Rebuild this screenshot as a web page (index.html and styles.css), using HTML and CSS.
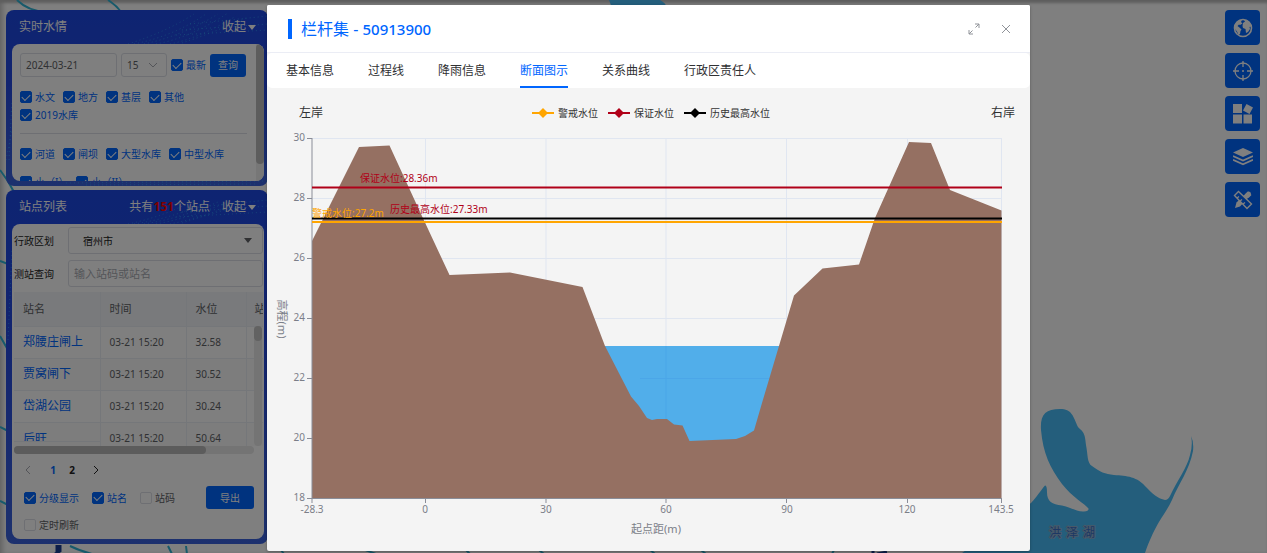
FILE: index.html
```html
<!DOCTYPE html>
<html lang="zh-CN">
<head>
<meta charset="utf-8">
<title>实时水情</title>
<link rel="stylesheet" href="styles.css">
</head>
<body>
<div class="map">
  <svg class="map-canvas" viewBox="0 0 1267 553" preserveAspectRatio="xMaxYMax slice" aria-hidden="true">
    <g fill="#49bdf9">
      <path d="M609 0H660Q666 3 667 8H612Z"/>
      <path d="M962 553L1031 503C1036 498 1041 490 1045 485.500Q1047 485 1047 492C1047 502 1052 504 1062 505.500C1072 508 1078 512 1084 511.500Q1089 511 1088.500 508.500C1085 504 1072 497 1062 484C1050 468 1043 453 1041 430C1040 415 1045 409 1060 409C1072 409 1073 416 1078 427C1083 432 1085 432 1086 445C1088 455 1087 463 1092 466C1100 472 1105 474 1114 475C1127 476 1137 476 1147 488C1155 497 1161 499 1165 500Q1168 500 1170 496C1177 481 1187 468 1190 455Q1193 445 1191 436Q1194 442 1193 451C1189 471 1179 483 1172 500C1165 515 1156 522 1145 553Z"/>
    </g>
    <g fill="none" stroke="#2fb4d6" stroke-width="2">
      <path d="M17 0Q28 11 46 12M108 0Q116 5 122 13M0 170Q8 180 14 192M0 261L8 264M0 336L8 350M0 427L8 431M0 501L8 505M70 546Q80 551 92 554M168 546L172 554M186 546L187 554M278 546L284 554M360 548L376 554M462 546L470 554M534 546L544 554M648 548L655 554M696 546L706 554M836 546L832 554"/>
    </g>
    <path d="M57 545V554M60 545V551L55 554M873 550V554M877 554L887 552" fill="none" stroke="#1a3c94" stroke-width="3"/>
    <text class="lake-name" x="1049 1066 1083" y="537">洪泽湖</text>
  </svg>
</div>

<aside class="sidebar">
  <section class="panel">
    <svg class="panel-art" viewBox="0 0 262 176" preserveAspectRatio="xMidYMin slice" aria-hidden="true">
      <g fill="none" stroke="#35b6ff" stroke-width="1" stroke-dasharray="1 3" opacity=".55">
        <path d="M122 34Q160 22 188 4M128 34Q168 26 200 4M138 34Q176 26 212 4M150 34Q184 28 222 3M164 34Q194 28 230 6M176 33Q204 24 240 8M184 14L262 6M176 20L262 14M170 25L262 20M0 150L8 110M3 150L6 90M60 173L262 171M80 175L250 174"/>
      </g>
    </svg>
    <header class="panel-head"><h2>实时水情</h2><button type="button" class="fold">收起<i class="caret"></i></button></header>
    <div class="panel-body water-filter">
      <div class="filters">
        <div class="query">
          <input class="field date" type="text" value="2024-03-21" aria-label="日期">
          <span class="hour"><select class="field" aria-label="小时"><option>15</option></select><svg viewBox="0 0 10 6" aria-hidden="true"><path d="M1 1L5 5L9 1"/></svg></span>
          <label class="check"><input type="checkbox" checked>最新</label>
          <button type="button" class="btn small">查询</button>
        </div>
        <div class="checks">
          <label class="check"><input type="checkbox" checked>水文</label>
          <label class="check"><input type="checkbox" checked>地方</label>
          <label class="check"><input type="checkbox" checked>基层</label>
          <label class="check"><input type="checkbox" checked>其他</label>
          <label class="check"><input type="checkbox" checked>2019水库</label>
        </div>
        <hr>
        <div class="checks loose">
          <label class="check"><input type="checkbox" checked>河道</label>
          <label class="check"><input type="checkbox" checked>闸坝</label>
          <label class="check"><input type="checkbox" checked>大型水库</label>
          <label class="check"><input type="checkbox" checked>中型水库</label>
          <label class="check"><input type="checkbox" checked>小（I）</label>
          <label class="check"><input type="checkbox" checked>小（II）</label>
        </div>
      </div>
      <div class="scroll-track"><div class="scroll-thumb filter-thumb"></div></div>
    </div>
  </section>

  <section class="panel">
    <svg class="panel-art" viewBox="0 0 262 356" preserveAspectRatio="xMidYMin slice" aria-hidden="true">
      <g fill="none" stroke="#35b6ff" stroke-width="1" stroke-dasharray="1 3" opacity=".55">
        <path d="M122 34Q160 26 188 10M128 34Q168 28 200 12M138 34Q176 28 212 12M150 34Q184 28 222 12M164 34Q194 28 230 14M176 33Q204 24 240 14M184 18L262 10M176 22L262 16M170 27L262 22M2 150L6 60"/>
      </g>
    </svg>
    <header class="panel-head"><h2>站点列表</h2><span class="total">共有<b>151</b>个站点</span><button type="button" class="fold">收起<i class="caret"></i></button></header>
    <div class="panel-body">
      <div class="form-row"><label for="area">行政区划</label><span class="area"><select id="area" class="field"><option>宿州市</option></select><i class="caret"></i></span></div>
      <div class="form-row"><label for="station">测站查询</label><input id="station" class="field" type="text" placeholder="输入站码或站名"></div>
      <div class="table-wrap">
        <table class="stations">
          <thead><tr><th class="c-name">站名</th><th class="c-time">时间</th><th class="c-level">水位</th><th>站码</th></tr></thead>
          <tbody>
            <tr><td><a href="#">郑腰庄闸上</a></td><td>03-21 15:20</td><td>32.58</td><td></td></tr>
            <tr class="alt"><td><a href="#">贾窝闸下</a></td><td>03-21 15:20</td><td>30.52</td><td></td></tr>
            <tr><td><a href="#">岱湖公园</a></td><td>03-21 15:20</td><td>30.24</td><td></td></tr>
            <tr class="alt"><td class="cut"><a href="#">后旺</a></td><td>03-21 15:20</td><td>50.64</td><td></td></tr>
          </tbody>
        </table>
        <div class="table-scroll"><div class="scroll-thumb"></div></div>
      </div>
      <div class="scroll-x"><div class="scroll-x-thumb"></div></div>
      <nav class="pager" aria-label="分页">
        <button type="button" aria-label="上一页" class="off"><svg viewBox="0 0 6 10"><path d="M5 1L1 5L5 9"/></svg></button>
        <button type="button" class="on">1</button>
        <button type="button">2</button>
        <button type="button" aria-label="下一页"><svg viewBox="0 0 6 10"><path d="M1 1L5 5L1 9"/></svg></button>
      </nav>
      <div class="options">
        <label class="check"><input type="checkbox" checked>分级显示</label>
        <label class="check"><input type="checkbox" checked>站名</label>
        <label class="check plain"><input type="checkbox">站码</label>
        <button type="button" class="btn">导出</button>
      </div>
      <div class="options refresh"><label class="check plain"><input type="checkbox">定时刷新</label></div>
    </div>
  </section>
</aside>

<div class="tools">
  <button type="button" aria-label="地球"><svg viewBox="0 0 20 20"><circle cx="10" cy="10" r="8.500" fill="none" stroke="#fff" stroke-width="1.600"/><path fill="#fff" d="M2 7C3 4 6 1.800 9 1.500L8 4L9.500 5.500L7 7L6 6.500L4.500 8L7 10L8.500 11.500L7.500 13L7 16L5.500 17L4 13.500L2 11ZM10 5L12 3.500L11 2H13.500C16 3 18.500 6 18.500 9.500L17.500 8.500L16.500 9L17 11L15 14L13 15L12.500 11L10 10L9.500 8Z"/></svg></button>
  <button type="button" aria-label="定位"><svg viewBox="0 0 20 20" fill="none" stroke="#fff" stroke-width="1.300"><circle cx="10" cy="10" r="8"/><path d="M10 0V6M10 14V20M0 10H6M14 10H20M9 10H11"/></svg></button>
  <button type="button" aria-label="应用"><svg viewBox="0 0 20 20" fill="#fff"><path d="M0 0H9V9H0ZM0 10.500H9V19.500H0ZM10.500 10.500H19V19.500H10.500ZM13.500 0L20 3.500L16.500 10L10 6.500Z"/></svg></button>
  <button type="button" aria-label="图层"><svg viewBox="0 0 20 20"><path d="M10 1L20 5.500L10 10L0 5.500Z" fill="#fff"/><path d="M0 9L10 13.500L20 9M0 12.800L10 17.300L20 12.800" fill="none" stroke="#fff" stroke-width="1.600"/></svg></button>
  <button type="button" aria-label="标绘"><svg viewBox="0 0 20 20"><path d="M2 18L3.500 12.500L14.500 1.800Q16 1 17.500 2.500Q18.500 4 17.500 5.200L7 16.500Z" fill="#fff"/><path d="M5.500 1.500L18.500 14L14 18.500L1.500 5.500Z" fill="#0066ff" stroke="#fff" stroke-width="1.400"/><path d="M4 8L6 6.500M7 11L9 9.500M10 14L12 12.500" stroke="#fff" stroke-width="1.300"/><path d="M12 4.500L15 1.500L18.500 5L15.500 8Z" fill="#fff"/></svg></button>
</div>

<div class="mask"></div>

<main class="dialog" role="dialog" aria-labelledby="dialog-title">
  <header class="dialog-head">
    <h1 id="dialog-title">栏杆集 - <span>50913900</span></h1>
    <button type="button" aria-label="全屏"><svg viewBox="0 0 12 12"><path d="M7 1H11V5M11 1L7.500 4.500M5 11H1V7M1 11L4.500 7.500"/></svg></button>
    <button type="button" aria-label="关闭"><svg viewBox="0 0 12 12"><path d="M2 2L10 10M10 2L2 10"/></svg></button>
  </header>
  <nav class="tabs">
    <a href="#">基本信息</a><a href="#">过程线</a><a href="#">降雨信息</a><a href="#" class="active">断面图示</a><a href="#">关系曲线</a><a href="#">行政区责任人</a>
  </nav>
  <div class="chart-head">
    <strong>左岸</strong>
    <ul class="legend">
      <li class="warn"><svg viewBox="0 0 22 10"><path d="M0 5H22" stroke="currentColor" stroke-width="2"/><path d="M11 0L16 5L11 10L6 5Z" fill="currentColor"/></svg><span>警戒水位</span></li>
      <li class="safe"><svg viewBox="0 0 22 10"><path d="M0 5H22" stroke="currentColor" stroke-width="2"/><path d="M11 0L16 5L11 10L6 5Z" fill="currentColor"/></svg><span>保证水位</span></li>
      <li class="peak"><svg viewBox="0 0 22 10"><path d="M0 5H22" stroke="currentColor" stroke-width="2"/><path d="M11 0L16 5L11 10L6 5Z" fill="currentColor"/></svg><span>历史最高水位</span></li>
    </ul>
    <strong>右岸</strong>
  </div>
  <svg class="chart" viewBox="267 128 763 423" role="img" aria-label="断面图示">
    <path class="grid" d="M312 138.500H1002M312 198.500H1002M312 258.500H1002M312 318.500H1002M312 378.500H1002M312 438.500H1002M425.500 138V498M546 138V498M666 138V498M786.500 138V498M907.500 138V498M1001.500 138V498"/>
    <path d="M604 346H780L755 450H640Z" fill="#51aeea"/>
    <path d="M640 378.500H772M666 346V430" stroke="#4ba6e8" fill="none"/>
    <path class="ground" d="M312 241L359 147L389.500 145.500L421 214L449.500 275L510 272.500L582.500 287L605 346L631 396.500L639 406L647 418L652 420L657 419H667L674 424.500L682.500 425.500L689.500 441L736 439L745 436L754 430.500L762 403L794 295.500L822.500 268.500L859 264.500L875 218L909 142L931 143L950 190L1001.500 210.500V498H312Z"/>
    <path class="axis" d="M312 138V499M311 498.500H1002M307 138.500H312M307 198.500H312M307 258.500H312M307 318.500H312M307 378.500H312M307 438.500H312M307 498.500H312M312 498V503M425.500 498V503M546 498V503M666 498V503M786.500 498V503M907.500 498V503M1001.500 498V503"/>
    <g fill="none" stroke-width="2"><path d="M312 187.500H1002" stroke="#b00018"/><path d="M312 222H1002" stroke="#ffa500"/><path d="M312 218.500H1002" stroke="#000"/></g>
    <g class="ticks" text-anchor="end"><text x="305" y="141">30</text><text x="305" y="201">28</text><text x="305" y="261">26</text><text x="305" y="321">24</text><text x="305" y="381">22</text><text x="305" y="441">20</text><text x="305" y="501">18</text></g>
    <g class="ticks" text-anchor="middle"><text x="312" y="513">-28.3</text><text x="425" y="513">0</text><text x="546" y="513">30</text><text x="666" y="513">60</text><text x="787" y="513">90</text><text x="907" y="513">120</text><text x="1001" y="513">143.5</text></g>
    <text class="axis-name" x="656" y="533" text-anchor="middle">起点距(m)</text>
    <text class="axis-name" transform="translate(278 319) rotate(90)" text-anchor="middle">高程(m)</text>
    <text class="mark" x="360" y="182">保证水位:28.36m</text>
    <text class="mark" x="390" y="213">历史最高水位:27.33m</text>
    <text class="mark mark-warn" x="312" y="217">警戒水位:27.2m</text>
  </svg>
</main>
</body>
</html>
```

FILE: styles.css
```css
* { box-sizing: border-box; }
body { margin: 0; min-height: 100vh; position: relative; overflow: hidden; background: #fff; color: #303133; font: 10px/16px "Noto Sans", "Noto Sans CJK SC", sans-serif; }
button, input, select { font: inherit; }
button { border: 0; padding: 0; background: none; cursor: pointer; }
h1, h2, ul { margin: 0; padding: 0; }
a { text-decoration: none; color: #0066ff; }
svg { display: block; }

.map { position: absolute; inset: 0; box-shadow: inset 0 4px 3px -1px #bbb, inset 5px 0 5px -2px #ccc; }
.map-canvas { width: 100%; height: 100%; }
.lake-name { font-size: 12px; fill: #3a70c8; stroke: #8fb0d0; stroke-width: 2px; paint-order: stroke; }
.mask { position: absolute; inset: 0; background: rgba(0, 0, 0, .5); }

.sidebar { position: absolute; left: 6px; top: 10px; width: 262px; display: grid; grid-template-columns: minmax(0, 1fr); gap: 4px; }
.panel { position: relative; padding: 0 4px 5px 6px; border-radius: 8px; background: linear-gradient(#1c48e4, #2448e0 40%, #3a62dc); }
.panel-art { position: absolute; inset: 0; width: 100%; height: 100%; }
.panel-head { position: relative; display: flex; align-items: center; gap: 12px; height: 34px; padding: 0 8px 0 7px; color: #fff; font-size: 12px; }
.panel-head h2 { font-size: 12px; font-weight: 400; margin-right: auto; }
.panel-head b { color: #ff0000; }
.fold { display: flex; align-items: center; gap: 2px; color: #fff; }
.caret { border: 4px solid transparent; border-top: 5px solid; border-bottom: 0; }
.panel-body { position: relative; border-radius: 8px; background: #fff; overflow: hidden; padding: 1px 1px 6px 2px; }

.water-filter { display: flex; height: 137px; padding: 0; }
.filters { flex: 1; min-width: 0; padding: 9px 9px 0 8px; }
.query { display: flex; align-items: center; gap: 4px; }
.field { width: 100%; height: 24px; border: 1px solid #dcdfe6; border-radius: 3px; background: #fff; color: #606266; padding: 0 5px; appearance: none; outline: 0; }
.date { width: 97px; flex: none; }
.hour { position: relative; width: 46px; flex: none; }
.hour svg { position: absolute; right: 9px; top: 9px; width: 10px; height: 6px; }
.hour path, .pager path { fill: none; stroke: currentColor; }
.hour svg { color: #a8abb2; }
.check { display: flex; align-items: center; gap: 3px; color: #0066ff; white-space: nowrap; }
.check input { appearance: none; width: 12px; height: 12px; margin: 0; border: 1px solid #dcdfe6; border-radius: 2px; display: grid; place-items: center; }
.check input:checked { background: #0066ff; border-color: #0066ff; }
.check input:checked::after { content: ""; width: 7px; height: 4px; margin-bottom: 2px; border: solid #fff; border-width: 0 0 1px 1px; rotate: -45deg; }
.plain { color: #606266; }
.btn { width: 48px; height: 23px; border-radius: 3px; background: #0066ff; color: #fff; }
.btn.small { width: 36px; flex: none; }
.checks { display: flex; flex-wrap: wrap; gap: 2px 8px; padding: 12px 32px 0 0; }
.checks.loose { gap: 12px 8px; padding: 0; }
hr { margin: 10px 0 12px; border: 0; border-top: 1px solid #dcdfe6; }
.scroll-track { width: 8px; background: #eee; }
.scroll-thumb { width: 8px; height: 15px; border-radius: 4px; background: #c4c4c4; }
.filter-thumb { height: 120px; background: #bbb; }

.form-row { display: grid; grid-template-columns: 54px 1fr; align-items: center; padding: 2px 0 4px; color: #222; }
.form-row .field { height: 27px; }
.form-row input::placeholder { color: #a8abb2; font-size: 11px; }
.area { position: relative; color: #606266; }
.area .field { display: block; padding-left: 14px; color: #222; }
.area .caret { position: absolute; right: 11px; top: 11px; }
.table-wrap { position: relative; height: 154px; overflow: hidden; margin-top: 1px; }
.stations { width: 270px; table-layout: fixed; border-collapse: collapse; color: #606266; }
.c-name, .c-time { width: 86px; }
.c-level { width: 60px; }
.stations th { height: 34px; background: #f2f4f8; font-size: 11px; font-weight: 400; }
.stations th, .stations td { padding: 0 9px; text-align: left; border-right: 1px solid #ebeef5; border-bottom: 1px solid #ebeef5; overflow: hidden; white-space: nowrap; }
.stations th:last-child { padding-left: 8px; }
.stations td { height: 32px; }
.stations a { font-size: 12px; }
.alt { background: #fafafa; }
.stations .cut { padding: 0; vertical-align: top; }
.cut a { display: block; height: 19px; line-height: 32px; padding-left: 9px; overflow: hidden; border-bottom: 1px solid #ebeef5; }
.table-scroll { position: absolute; right: 1px; top: 34px; bottom: 0; width: 8px; border-radius: 4px; background: #e8e8e8; }
.scroll-x { width: 240px; height: 8px; border-radius: 4px; background: #e8e8e8; }
.scroll-x-thumb { width: 80%; height: 8px; border-radius: 4px; background: #b8b8b8; }
.pager { display: flex; align-items: center; height: 32px; padding-left: 10px; }
.pager button { display: grid; place-items: center; width: 8px; margin-right: 17px; font-weight: 700; color: #222; }
.pager button + button { margin-right: 11px; }
.pager button + button + button { margin-right: 16px; }
.pager svg { width: 6px; height: 10px; }
.pager .on { color: #0066ff; }
.pager .off { color: #a8abb2; }
.options { display: flex; align-items: center; gap: 13px; padding: 0 9px 0 10px; }
.options .btn { margin-left: auto; }
.refresh { padding-top: 8px; }

.tools { position: absolute; right: 7px; top: 10px; display: grid; gap: 8px; }
.tools button { display: grid; place-items: center; width: 35px; height: 35px; border-radius: 4px; background: #0066ff; }
.tools svg { width: 20px; height: 20px; }

.dialog { position: absolute; left: 267px; right: 237px; top: 5px; background: #f4f4f4; border-radius: 2px; overflow: hidden; box-shadow: 0 1px 3px rgba(0, 0, 0, .3); }
.dialog-head { display: flex; align-items: center; gap: 20px; height: 48px; padding: 0 18px 0 21px; background: #fff; border-bottom: 1px solid #ebedf5; }
.dialog-head h1 { margin-right: auto; padding-left: 9px; border-left: 4px solid #0066ff; color: #0066ff; font-size: 16px; font-weight: 400; line-height: 20px; }
.dialog-head span { font-size: 15px; font-weight: 500; }
.dialog-head svg { width: 12px; height: 12px; fill: none; stroke: #909399; }
.tabs { display: flex; gap: 34px; padding: 0 19px; background: #fff; border-radius: 5px; font-size: 12px; line-height: 30px; }
.tabs a { padding-top: 3px; color: #303133; border-bottom: 2px solid transparent; }
.tabs .active { color: #0066ff; border-color: #0066ff; }
.chart-head { display: flex; justify-content: space-between; align-items: center; height: 40px; padding: 10px 15px 0 32px; }
.chart-head strong { font-size: 12px; font-weight: 400; }
.legend { display: flex; gap: 10px; margin-right: 12px; list-style: none; }
.legend li { display: flex; align-items: center; gap: 4px; }
.legend svg { width: 22px; height: 10px; }
.legend span { color: #333; }
.warn { color: #ffa500; }
.safe { color: #b00018; }
.peak { color: #000; }
.chart { width: 100%; height: auto; }
.grid { fill: none; stroke: #e0e6f1; }
.ground { fill: #957062; }
.axis { fill: none; stroke: #8a8d98; }
.ticks, .axis-name { fill: #7b7e88; font-size: 10px; }
.axis-name { font-size: 11px; }
.mark { fill: #b00018; font-size: 10px; }
.mark-warn { fill: #ffa500; }
```
